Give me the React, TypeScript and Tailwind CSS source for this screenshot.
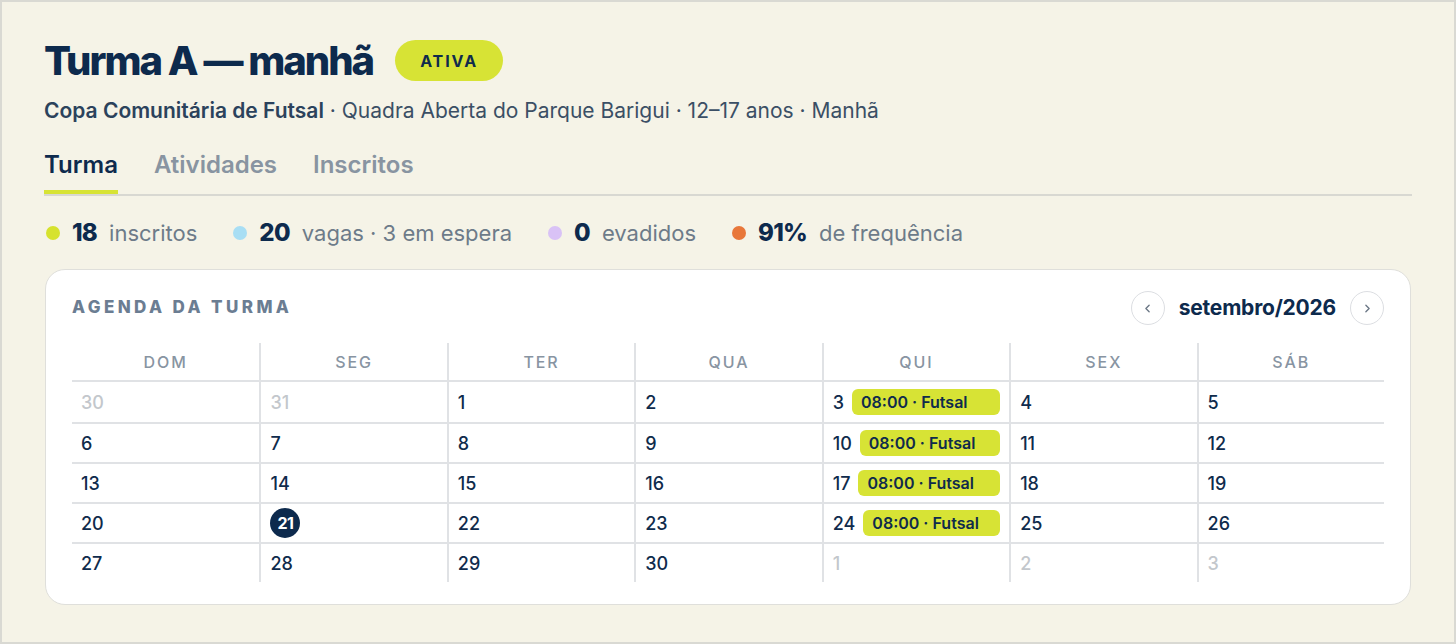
import { ChevronLeft, ChevronRight } from "lucide-react";

type Day = { n: number; muted?: boolean; today?: boolean; event?: string };

const WEEKDAYS = ["DOM", "SEG", "TER", "QUA", "QUI", "SEX", "SÁB"];

// setembro/2026 starts on a Tuesday
function buildWeeks(): Day[][] {
  const days: Day[] = [{ n: 30, muted: true }, { n: 31, muted: true }];
  for (let d = 1; d <= 30; d++) {
    const day: Day = { n: d };
    if ([3, 10, 17, 24].includes(d)) day.event = "08:00 · Futsal";
    if (d === 21) day.today = true;
    days.push(day);
  }
  for (let d = 1; d <= 3; d++) days.push({ n: d, muted: true });
  const weeks: Day[][] = [];
  for (let i = 0; i < days.length; i += 7) weeks.push(days.slice(i, i + 7));
  return weeks;
}

const STATS = [
  { dot: "bg-[#d6e22e]", value: "18", label: "inscritos" },
  { dot: "bg-[#a8def4]", value: "20", label: "vagas · 3 em espera" },
  { dot: "bg-[#d9c2f6]", value: "0", label: "evadidos" },
  { dot: "bg-[#e8773a]", value: "91%", label: "de frequência" },
];

export default function App() {
  const weeks = buildWeeks();

  return (
    <div
      className="h-[644px] w-full overflow-hidden border-2 border-[#d9d9d3] bg-[#f5f3e7] px-[42px] pt-[38px] text-[#0f2b4c]"
      style={{ fontFamily: "Inter, 'Noto Sans', sans-serif" }}
    >
      {/* Header */}
      <div className="flex items-center gap-[22px]">
        <h1 className="text-[40px] font-extrabold leading-none tracking-[-0.05em] text-[#0d2a4d]">
          Turma A — manhã
        </h1>
        <span className="flex h-[41px] w-[108px] items-center justify-center rounded-full bg-[#d7e335] text-[16px] font-bold tracking-[0.12em] text-[#0f2b4c]">
          ATIVA
        </span>
      </div>

      <p className="mt-[16px] text-[21px] leading-[28px] text-[#3b4f65]">
        <span className="font-semibold text-[#2b425c]">Copa Comunitária de Futsal</span>
        {" · Quadra Aberta do Parque Barigui · 12–17 anos · Manhã"}
      </p>

      {/* Tabs */}
      <div className="mt-[25px] flex gap-[36px] border-b-2 border-[#d8d8d2]">
        <span className="border-b-4 border-[#d7e335] pb-[10px] text-[24px] font-semibold leading-[30px] text-[#0d2a4d]">
          Turma
        </span>
        <span className="pb-[14px] text-[24px] font-semibold leading-[30px] text-[#8894a1]">
          Atividades
        </span>
        <span className="pb-[14px] text-[24px] font-semibold leading-[30px] text-[#8894a1]">
          Inscritos
        </span>
      </div>

      {/* Stats */}
      <div className="mt-[22px] flex items-center gap-[36px] pl-[2px]">
        {STATS.map((s) => (
          <div key={s.label} className="flex items-center">
            <span className={`h-[14px] w-[14px] rounded-full ${s.dot}`} />
            <span className="ml-[12px] text-[24px] font-extrabold leading-[30px] tracking-[-0.03em] text-[#0d2a4d]">
              {s.value}
            </span>
            <span className="ml-[12px] text-[22px] leading-[30px] text-[#6d7b89]">{s.label}</span>
          </div>
        ))}
      </div>

      {/* Agenda card */}
      <section className="mt-[21px] ml-[1px] mr-[1px] rounded-[20px] border-[1.5px] border-[#dfdfdb] bg-white px-[26px] pt-[21px] pb-[22px]">
        <div className="flex items-center justify-between">
          <h2 className="text-[17px] font-extrabold tracking-[0.2em] text-[#6b7d92]">
            AGENDA DA TURMA
          </h2>
          <div className="flex items-center gap-[14px]">
            <button
              type="button"
              className="flex h-[34px] w-[34px] items-center justify-center rounded-full border-[1.5px] border-[#dcdee2] text-[#6b7785]"
            >
              <ChevronLeft size={13} strokeWidth={2.5} />
            </button>
            <span className="text-[21px] font-bold tracking-[-0.01em] text-[#0d2a4d]">
              setembro/2026
            </span>
            <button
              type="button"
              className="flex h-[34px] w-[34px] items-center justify-center rounded-full border-[1.5px] border-[#dcdee2] text-[#6b7785]"
            >
              <ChevronRight size={13} strokeWidth={2.5} />
            </button>
          </div>
        </div>

        <div className="mt-[18px] grid grid-cols-7">
          {WEEKDAYS.map((w, i) => (
            <div
              key={w}
              className={`flex h-[39px] items-center justify-center border-b-2 border-[#e0e2e5] text-[16px] font-medium tracking-[0.12em] text-[#8894a2] ${
                i > 0 ? "border-l-2" : ""
              }`}
            >
              {w}
            </div>
          ))}
          {weeks.map((week, wi) =>
            week.map((d, di) => (
              <div
                key={`${wi}-${di}`}
                className={`flex h-[40px] items-center border-[#e0e2e5] px-[9px] ${
                  di > 0 ? "border-l-2" : ""
                } ${wi > 0 ? "border-t-2" : ""}`}
              >
                {d.today ? (
                  <span className="flex h-[30px] w-[30px] items-center justify-center rounded-full bg-[#0d2a4d] text-[16px] font-bold tracking-[-0.03em] text-white">
                    {d.n}
                  </span>
                ) : (
                  <span
                    className={`text-[18px] font-medium ${
                      d.muted ? "text-[#c3c7cc]" : "text-[#0f2b4c]"
                    }`}
                  >
                    {d.n}
                  </span>
                )}
                {d.event && (
                  <span className="ml-[8px] flex h-[26px] flex-1 items-center rounded-[6px] bg-[#d7e335] px-[9px] text-[16px] font-semibold text-[#0f2b4c]">
                    {d.event}
                  </span>
                )}
              </div>
            ))
          )}
        </div>
      </section>
    </div>
  );
}
